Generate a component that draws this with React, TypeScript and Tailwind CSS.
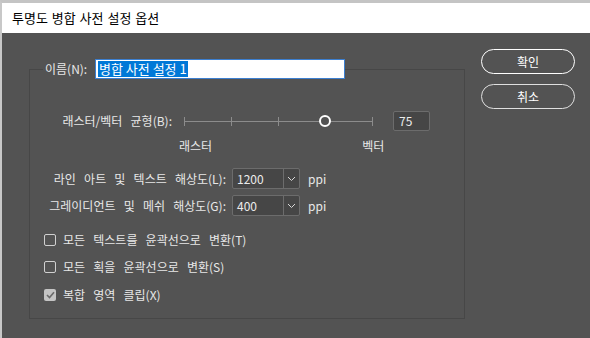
import React from "react";

const font = { fontFamily: '"Noto Sans CJK KR", "Noto Sans", sans-serif' };

function Chevron() {
  return (
    <svg width="9" height="6" viewBox="0 0 9 6">
      <polyline points="1,1 4.5,4.5 8,1" fill="none" stroke="#d8d8d8" strokeWidth="1" />
    </svg>
  );
}

function Select({ value }: { value: string }) {
  return (
    <div className="flex h-[21px] w-[68px] items-stretch rounded-[2px] border border-[#6c6c6c] bg-[#464646]">
      <div className="flex w-[50px] items-center pl-[4px] text-[12px] text-[#ececec]">{value}</div>
      <div className="flex flex-1 items-center justify-center border-l border-[#6c6c6c]">
        <Chevron />
      </div>
    </div>
  );
}

function Check({ checked, label }: { checked?: boolean; label: string }) {
  return (
    <div className="flex h-[18px] items-center pl-[14px]">
      {checked ? (
        <div className="flex h-[12px] w-[12px] items-center justify-center rounded-[2px] bg-[#c4c4c4]">
          <svg width="9" height="8" viewBox="0 0 9 8">
            <polyline points="1,4 3.5,6.5 8,1.2" fill="none" stroke="#6a6a6a" strokeWidth="1.6" />
          </svg>
        </div>
      ) : (
        <div className="h-[12px] w-[12px] rounded-[2px] border border-[#d0d0d0]" />
      )}
      <span className="ml-[7px] text-[12px] text-[#e8e8e8] [word-spacing:5.5px]">{label}</span>
    </div>
  );
}

export default function App() {
  return (
    <div
      className="flex h-[338px] w-[590px] flex-col overflow-hidden border-l-2 border-t-[3px] border-l-[#c8c8c8] border-t-[#c4c4c4] bg-[#535353]"
      style={font}
    >
      <div className="flex h-[30px] shrink-0 items-center bg-white pl-[10px] text-[13px] text-black [word-spacing:1px]">
        투명도 병합 사전 설정 옵션
      </div>
      <div className="flex flex-1">
        <div className="ml-[27px] w-[436px] pt-[26px]">
          <div className="relative z-10 flex h-[20px] items-center">
            <div className="ml-[14px] flex h-full w-[52px] items-center bg-[#535353] pl-[2px] text-[12px] text-[#e8e8e8]">
              이름(N):
            </div>
            <div className="flex h-[20px] w-[250px] items-center border border-[#3c7fd0] bg-white pl-[2px]">
              <span className="bg-[#0078d7] px-[1px] text-[13px] leading-[16px] text-white">병합 사전 설정 1</span>
            </div>
          </div>
          <div className="-mt-[10px] h-[250px] border border-[#474747] [word-spacing:5.5px]">
            <div className="mt-[41px] flex h-[20px] items-center">
              <div className="w-[142px] text-right text-[12px] text-[#e8e8e8]">래스터/벡터 균형(B):</div>
              <div className="relative ml-[12px] h-[20px] w-[189px]">
                <div className="absolute left-0 top-[10px] h-px w-[189px] bg-[#8c8c8c]" />
                <div className="absolute left-0 top-[6px] h-[9px] w-px bg-[#8c8c8c]" />
                <div className="absolute left-[47px] top-[6px] h-[9px] w-px bg-[#8c8c8c]" />
                <div className="absolute left-[94px] top-[6px] h-[9px] w-px bg-[#8c8c8c]" />
                <div className="absolute left-[188px] top-[6px] h-[9px] w-px bg-[#8c8c8c]" />
                <div className="absolute left-[135px] top-[4px] h-[12px] w-[12px] rounded-full border-2 border-white bg-[#535353]" />
              </div>
              <div className="ml-[20px] flex h-[20px] w-[37px] items-center rounded-[2px] border border-[#6c6c6c] bg-[#464646] pl-[5px] text-[12px] text-[#ececec]">
                75
              </div>
            </div>
            <div className="mt-[7px] flex h-[16px] items-center text-[12px] text-[#e8e8e8]">
              <span className="ml-[149px]">래스터</span>
              <span className="ml-[150px]">벡터</span>
            </div>
            <div className="mt-[14px] flex items-center">
              <div className="w-[196px] text-right text-[12px] text-[#e8e8e8]">라인 아트 및 텍스트 해상도(L):</div>
              <div className="ml-[6px]">
                <Select value="1200" />
              </div>
              <span className="ml-[8px] text-[12px] text-[#e8e8e8]">ppi</span>
            </div>
            <div className="mt-[6px] flex items-center">
              <div className="w-[196px] text-right text-[12px] text-[#e8e8e8]">그레이디언트 및 메쉬 해상도(G):</div>
              <div className="ml-[6px]">
                <Select value="400" />
              </div>
              <span className="ml-[8px] text-[12px] text-[#e8e8e8]">ppi</span>
            </div>
            <div className="mt-[15px]">
              <Check label="모든 텍스트를 윤곽선으로 변환(T)" />
            </div>
            <div className="mt-[9px]">
              <Check label="모든 획을 윤곽선으로 변환(S)" />
            </div>
            <div className="mt-[10px]">
              <Check checked label="복합 영역 클립(X)" />
            </div>
          </div>
        </div>
        <div className="ml-[16px] flex w-[94px] flex-col pt-[16px]">
          <button className="flex h-[25px] items-center justify-center rounded-full border-[1.5px] border-white text-[12px] text-white">
            확인
          </button>
          <button className="mt-[10px] flex h-[25px] items-center justify-center rounded-full border-[1.5px] border-[#e0e0e0] text-[12px] text-white">
            취소
          </button>
        </div>
      </div>
    </div>
  );
}
